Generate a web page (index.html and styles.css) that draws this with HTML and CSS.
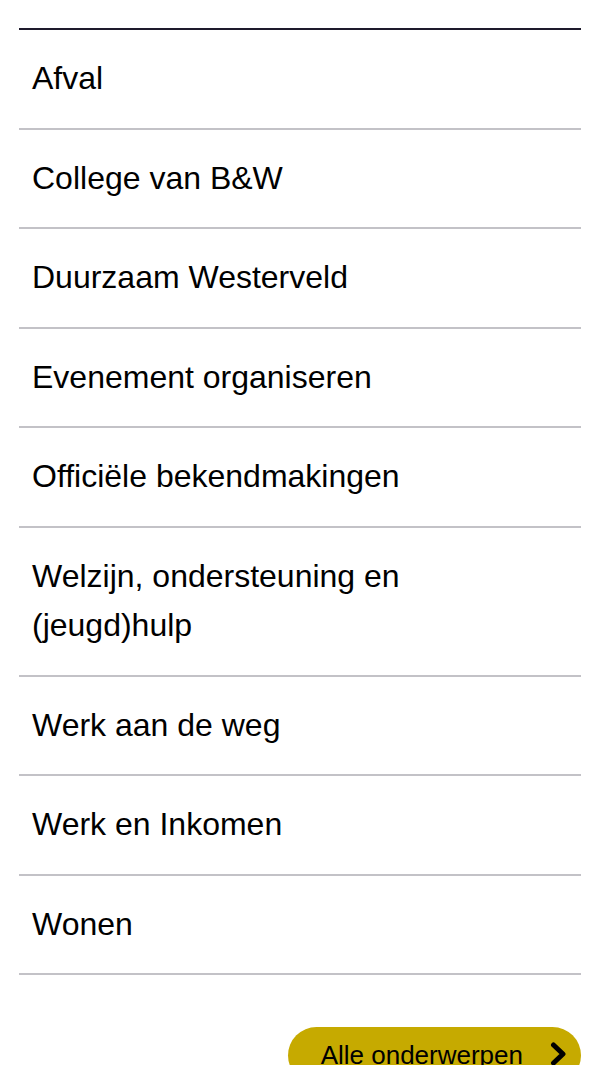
FILE: index.html
```html
<!DOCTYPE html>
<html lang="nl">
<head>
<meta charset="utf-8">
<link rel="stylesheet" href="styles.css">
</head>
<body>
<div class="page">
  <ul class="topics">
    <li><a href="#">Afval</a></li>
    <li><a href="#">College van B&amp;W</a></li>
    <li><a href="#">Duurzaam Westerveld</a></li>
    <li><a href="#">Evenement organiseren</a></li>
    <li><a href="#">Officiële bekendmakingen</a></li>
    <li><a href="#">Welzijn, ondersteuning en (jeugd)hulp</a></li>
    <li><a href="#">Werk aan de weg</a></li>
    <li><a href="#">Werk en Inkomen</a></li>
    <li><a href="#">Wonen</a></li>
  </ul>
  <div class="actions">
    <a class="btn" href="#">
      <span>Alle onderwerpen</span>
      <svg class="chev" width="17" height="24" viewBox="0 0 17 24" aria-hidden="true">
        <polyline points="3.5,3 13,12 3.5,21" fill="none" stroke="#000" stroke-width="5" stroke-linecap="round" stroke-linejoin="round"/>
      </svg>
    </a>
  </div>
</div>
</body>
</html>
```
FILE: styles.css
```css
html, body {
  margin: 0;
  padding: 0;
  background: #fff;
}
body {
  font-family: "Liberation Sans", Arial, sans-serif;
  color: #000;
}
.page {
  padding: 28px 19px 0;
}
.topics {
  list-style: none;
  margin: 0;
  padding: 0;
  border-top: 2px solid #1e1a2c;
}
.topics li {
  border-bottom: 2px solid #c3c2c7;
  padding: 24px 13px 24px 13px;
}
.topics a {
  display: block;
  font-size: 32px;
  line-height: 49.5px;
  color: #000;
  text-decoration: none;
  padding-right: 160px;
}
.actions {
  display: flex;
  justify-content: flex-end;
  margin-top: 52px;
}
.btn {
  display: flex;
  align-items: center;
  gap: 27px;
  background: #c6aa00;
  color: #000;
  text-decoration: none;
  font-size: 26px;
  line-height: 39px;
  padding: 9px 14px 9px 33px;
  border-radius: 30px;
}
.chev {
  display: block;
  margin-top: -4px;
}
```
